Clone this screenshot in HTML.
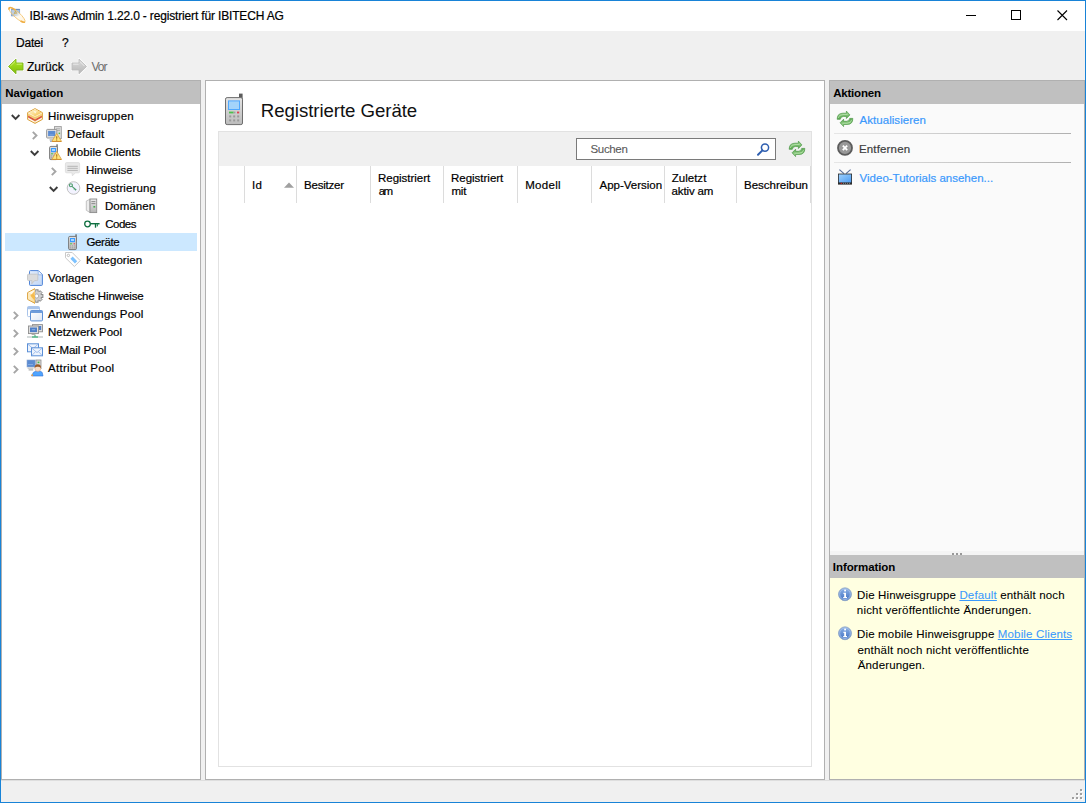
<!DOCTYPE html>
<html lang="de">
<head>
<meta charset="utf-8">
<title>IBI-aws Admin 1.22.0 - registriert für IBITECH AG</title>
<style>
*{box-sizing:border-box;margin:0;padding:0}
html,body{width:1086px;height:803px;overflow:hidden;background:#f0f0f0}
body{font-family:"Liberation Sans",sans-serif;font-size:11.5px;color:#000;position:relative;line-height:14px;-webkit-text-stroke:.2px}
#win{position:absolute;left:0;top:0;width:1086px;height:803px;border:1px solid #1883d7;background:#f0f0f0}
#title{position:absolute;left:1px;top:1px;width:1084px;height:30px;background:#fff}
#menu{position:absolute;left:1px;top:31px;width:1084px;height:24px}
#tool{position:absolute;left:1px;top:55px;width:1084px;height:25px}
#status{position:absolute;left:1px;top:780px;width:1084px;height:22px;border-top:1px solid #dedede}
#status svg{margin-top:-1px}
.t{white-space:nowrap;position:absolute}
svg{position:absolute;overflow:visible}
#nav{position:absolute;left:1px;top:80px;width:200px;height:700px;background:#fff;box-shadow:inset 0 0 0 1px #b0b0b0}
.hdr{position:absolute;left:0;top:0;right:0;height:24px;background:#c0c0c0;font-weight:bold;-webkit-text-stroke:0;border:1px solid #b0b0b0;border-bottom:0}
.hdr .t{margin:-1px 0 0 -1px}
.row.sel{background:#cce8ff}
#main{position:absolute;left:205px;top:80px;width:620px;height:700px;background:#fff;box-shadow:inset 0 0 0 1px #b0b0b0}
#grid{position:absolute;left:13px;top:51px;width:594px;height:636px;background:#fff;box-shadow:inset 0 0 0 1px #e2e2e2}
#gtb{position:absolute;left:1px;top:1px;right:1px;height:34px;background:#f0f0f0}
#gtb>svg{margin:-1px 0 0 -1px}
#search{position:absolute;left:357px;top:6px;width:200px;height:22px;box-shadow:inset 0 0 0 1px #7a7a7a;background:#fff}
.ch{border-left:1px solid #dcdcdc}
.ch>*{margin-left:-1px}
.clip{position:absolute;left:0;top:0;height:37px;overflow:hidden}
#right{position:absolute;left:829px;top:80px;width:256px;height:700px;box-shadow:inset 0 0 0 1px #b0b0b0;background:#fafafa}
#split{position:absolute;left:1px;right:1px;top:471px;height:4px;background:#f4f4f4}
#split svg{margin-left:-1px}
#info{position:absolute;left:0;right:0;top:475px;bottom:0;background:#ffffe1;box-shadow:inset 1px 0 0 #b0b0b0,inset -1px 0 0 #b0b0b0,inset 0 -1px 0 #b0b0b0}
#info .hdr{height:23px;border:0;left:1px;right:1px}
#info .hdr .t{margin:0 0 0 -1px}
.sep{background:linear-gradient(to right,#e6e6e6,#b0b0b0)}
a{color:#3b99fc;text-decoration:underline}
.link{color:#3b99fc}
</style>
</head>
<body>
<svg width="0" height="0" style="left:0;top:0"><defs>
<linearGradient id="gph" x1="0" y1="0" x2="0" y2="1"><stop offset="0" stop-color="#e4e4e4"/><stop offset="1" stop-color="#bcbcbc"/></linearGradient>
<linearGradient id="gbox" x1="0" y1="0" x2="1" y2="1"><stop offset="0" stop-color="#fff6dc"/><stop offset=".55" stop-color="#fbdc8c"/><stop offset="1" stop-color="#f3b63c"/></linearGradient>
<linearGradient id="gstat" x1="0" y1="0" x2="1" y2="0"><stop offset="0" stop-color="#fff4d8"/><stop offset="1" stop-color="#f2b43c"/></linearGradient>
<linearGradient id="gsrv" x1="0" y1="0" x2="0" y2="1"><stop offset="0" stop-color="#ececec"/><stop offset="1" stop-color="#b4b4b4"/></linearGradient>
<linearGradient id="gwin" x1="0" y1="0" x2="1" y2="1"><stop offset="0" stop-color="#ffffff"/><stop offset="1" stop-color="#dfe7f4"/></linearGradient>
<linearGradient id="grf" x1="0" y1="0" x2="0" y2="1"><stop offset="0" stop-color="#a4da96"/><stop offset="1" stop-color="#58a64e"/></linearGradient>
<linearGradient id="ginf" x1="0" y1="0" x2="0" y2="1"><stop offset="0" stop-color="#8fb4e8"/><stop offset="1" stop-color="#3f6fc0"/></linearGradient>
<linearGradient id="gback" x1="0" y1="0" x2="0" y2="1"><stop offset="0" stop-color="#b4e62c"/><stop offset=".5" stop-color="#98d416"/><stop offset="1" stop-color="#82bc10"/></linearGradient>
<linearGradient id="gfwd" x1="0" y1="0" x2="0" y2="1"><stop offset="0" stop-color="#dcdcdc"/><stop offset="1" stop-color="#b6b6b6"/></linearGradient>
<linearGradient id="gtv" x1="0" y1="0" x2="1" y2="1"><stop offset="0" stop-color="#9cd0ff"/><stop offset="1" stop-color="#4f9cf0"/></linearGradient>
<linearGradient id="gell" x1="0" y1="0" x2="1" y2="0"><stop offset="0" stop-color="#fff8ea" stop-opacity=".1"/><stop offset=".4" stop-color="#fff8ea" stop-opacity=".25"/><stop offset=".6" stop-color="#fffaf0" stop-opacity=".95"/><stop offset="1" stop-color="#fff3dc"/></linearGradient>
<linearGradient id="gdoc" x1="0" y1="0" x2="1" y2="1"><stop offset="0" stop-color="#e2ecfb"/><stop offset="1" stop-color="#c2d7f5"/></linearGradient>
<clipPath id="cgear"><rect x="8.2" y="0" width="9" height="16"/></clipPath>
</defs></svg>

<div id="win"></div>
<div id="title">
<svg style="left:7px;top:5px" width="18" height="18" viewBox="0 0 18 18"><rect x="3.3" y="3.3" width="8.4" height="6.6" fill="#aac4e2" stroke="#7f9dc4" stroke-width=".7"/><path d="M3.3 3.4 H11.7" stroke="#5f83b4" stroke-width=".9"/><path d="M5.9 8.4 L7.5 5 L9.1 8.4 M6.6 7.2 H8.4" stroke="#b8922a" stroke-width=".9" fill="none"/><g transform="rotate(42 9 8.9)"><ellipse cx="9" cy="8.9" rx="10.6" ry="2.9" fill="url(#gell)" stroke="#f3c26a" stroke-width=".8"/><ellipse cx="9" cy="8.9" rx="10.4" ry="2.8" fill="none" stroke="#f0ae44" stroke-width="1.7" stroke-dasharray="4.5 16 9 16 4.5"/></g></svg>
<span id="ttl" class="t" style="left:28.5px;top:8px;letter-spacing:-0.16px;font-size:12px">IBI-aws Admin 1.22.0 - registriert für IBITECH AG</span>
<svg style="left:959px;top:4px" width="120" height="20" viewBox="0 0 120 20"><path d="M6 10.5 H16" stroke="#000" stroke-width="1"/><rect x="51.5" y="5.5" width="9" height="9" fill="none" stroke="#000" stroke-width="1"/><path d="M97.5 5.5 L107 15 M107 5.5 L97.5 15" stroke="#000" stroke-width="1.1"/></svg>
</div>
<div id="menu">
<span id="datei" class="t" style="left:15.0px;top:5px;letter-spacing:-0.2px;font-size:12px">Datei</span>
<span id="qm" class="t" style="left:61.1px;top:5px;font-size:12px">?</span>
</div>
<div id="tool">
<svg style="left:7px;top:4px" width="15" height="15" viewBox="0 0 15 15"><path d="M.3 7.5 L8 -.1 L8 4 L15.1 4 L15.1 11 L8 11 L8 15.1Z" fill="none" stroke="#fff" stroke-opacity=".7" stroke-width="2.2" stroke-linejoin="round"/><path d="M.5 7.5 L8 .2 L8 4 L15 4 L15 11 L8 11 L8 14.8Z" fill="url(#gback)" stroke="#7db31a" stroke-width=".9" stroke-linejoin="round"/><path d="M2.4 7 L7 2.6 M8.6 5.2 H13.8" stroke="#d8f58a" stroke-width=".9" stroke-opacity=".9" fill="none"/></svg>
<span id="zurueck" class="t" style="left:25.9px;top:5px;letter-spacing:0.02px;font-size:12px">Zurück</span>
<svg style="left:71px;top:4px" width="15" height="15" viewBox="0 0 15 15"><path d="M14.7 7.5 L7 -.1 L7 4 L-.1 4 L-.1 11 L7 11 L7 15.1Z" fill="none" stroke="#fff" stroke-opacity=".6" stroke-width="2.2" stroke-linejoin="round"/><path d="M14.5 7.5 L7 .2 L7 4 L0 4 L0 11 L7 11 L7 14.8Z" fill="url(#gfwd)" stroke="#bcbcbc" stroke-width=".9" stroke-linejoin="round"/><path d="M1.2 5.2 H6.6 M8 2.6 L12.4 7" stroke="#ececec" stroke-width=".9" fill="none"/></svg>
<span id="vor" class="t" style="left:90.4px;top:5px;letter-spacing:-0.9px;font-size:12px;color:#6d6d6d;-webkit-text-stroke:0">Vor</span>
</div>
<div id="nav">
<div class="hdr"><span id="hnav" class="t" style="left:4.2px;top:6px;letter-spacing:-0.078px">Navigation</span></div>
<div class="row" style="position:absolute;left:4px;top:27px;width:192px;height:18px;">
<svg style="left:6px;top:0px" width="10" height="18" viewBox="0 0 10 18"><path d="M.8 8 L4.6 11.8 L8.4 8" fill="none" stroke="#3c3c3c" stroke-width="1.9"/></svg>
<svg style="left:22px;top:1px" width="16" height="16" viewBox="0 0 16 16"><path d="M8 .6 L15.4 4.6 L15.4 11.4 L8 15.4 L.6 11.4 L.6 4.6 Z" fill="#fff6e4" stroke="#dba23c" stroke-width="1" stroke-linejoin="round"/><path d="M8 1.1 L14.8 4.7 L8 8.3 L1.2 4.7 Z" fill="url(#gbox)"/><path d="M1.1 5.4 L8 9 L14.9 5.4 L14.9 7.4 L8 11 L1.1 7.4 Z" fill="#f7d070"/><path d="M1.1 7.6 L8 11.2 L14.9 7.6 L14.9 9.6 L8 13.2 L1.1 9.6 Z" fill="#d9573a"/><path d="M6.4 3 L9.6 3.4 L8.2 5.6Z" fill="#fffbe8"/><path d="M8 8.4 V15" stroke="#e8b85a" stroke-width=".5"/></svg>
<span id="row0" class="t" style="left:43.0px;top:2px;letter-spacing:0.254px">Hinweisgruppen</span>
</div>
<div class="row" style="position:absolute;left:4px;top:45px;width:192px;height:18px;">
<svg style="left:27px;top:0px" width="6" height="18" viewBox="0 0 6 18"><path d="M.8 6.8 L4.5 10.5 L.8 14.2" fill="none" stroke="#a6a6a6" stroke-width="1.9"/></svg>
<svg style="left:41px;top:1px" width="16" height="16" viewBox="0 0 16 16"><rect x="8.5" y=".6" width="6.8" height="12" fill="#dedede" stroke="#9c9c9c" stroke-width=".9"/><rect x="10" y="2.4" width="4" height=".9" fill="#a8a8a8"/><rect x="10" y="4.2" width="4" height=".9" fill="#a8a8a8"/><rect x="12.6" y="6.6" width="1.5" height="1.5" fill="#4cb84c"/><rect x=".6" y="3.4" width="10.2" height="8.6" rx=".8" fill="#e2e2e2" stroke="#8e8e8e" stroke-width=".9"/><rect x="2.1" y="4.9" width="7.2" height="5.2" fill="#5b8bd2"/><rect x="3.6" y="8.6" width="4" height=".7" fill="#8fb2e4"/><path d="M3.5 13 L8 13 L8 14.6 L3.5 14.6Z" fill="#c8c8c8"/><path d="M4 15.2 L6 15.2" stroke="#6e8fc4" stroke-width="1"/><path d="M10.7 7.4 L15.5 15.4 L5.9 15.4 Z" fill="#ffe47a" stroke="#dba548" stroke-width=".9" stroke-linejoin="round"/><path d="M6.2 15.5 H15.3" stroke="#d08a2c" stroke-width=".9"/><path d="M10.7 10.2 L10.7 12.8" stroke="#b47a20" stroke-width="1.2"/><circle cx="10.7" cy="14" r=".65" fill="#b47a20"/></svg>
<span id="row1" class="t" style="left:62.1px;top:2px;letter-spacing:0.1px">Default</span>
</div>
<div class="row" style="position:absolute;left:4px;top:63px;width:192px;height:18px;">
<svg style="left:25px;top:0px" width="10" height="18" viewBox="0 0 10 18"><path d="M.8 8 L4.6 11.8 L8.4 8" fill="none" stroke="#3c3c3c" stroke-width="1.9"/></svg>
<svg style="left:41px;top:1px" width="16" height="16" viewBox="0 0 16 16"><rect x="10.4" y="0.3" width="1.3" height="6" fill="#606060"/><rect x="3.6" y="2.4" width="7.8" height="13.2" rx="1.2" fill="url(#gph)" stroke="#6e6e6e" stroke-width=".9"/><rect x="5" y="4" width="5" height="4.2" fill="#3b9bff"/><rect x="6" y="5" width="3" height="2" fill="#a8d6ff"/><rect x="5" y="9.3" width="2.2" height="1" fill="#4cc04c"/><rect x="8.6" y="9.3" width="1.4" height="1" fill="#e04040"/><g fill="#a0a0a0"><rect x="5" y="11.4" width="1.1" height="1"/><rect x="7" y="11.4" width="1.1" height="1"/><rect x="9" y="11.4" width="1.1" height="1"/><rect x="5" y="13.3" width="1.1" height="1"/><rect x="7" y="13.3" width="1.1" height="1"/><rect x="9" y="13.3" width="1.1" height="1"/></g><path d="M10.7 7.4 L15.5 15.4 L5.9 15.4 Z" fill="#ffe47a" stroke="#dba548" stroke-width=".9" stroke-linejoin="round"/><path d="M6.2 15.5 H15.3" stroke="#d08a2c" stroke-width=".9"/><path d="M10.7 10.2 L10.7 12.8" stroke="#b47a20" stroke-width="1.2"/><circle cx="10.7" cy="14" r=".65" fill="#b47a20"/></svg>
<span id="row2" class="t" style="left:62.1px;top:2px;letter-spacing:0.1px">Mobile Clients</span>
</div>
<div class="row" style="position:absolute;left:4px;top:81px;width:192px;height:18px;">
<svg style="left:46px;top:0px" width="6" height="18" viewBox="0 0 6 18"><path d="M.8 6.8 L4.5 10.5 L.8 14.2" fill="none" stroke="#a6a6a6" stroke-width="1.9"/></svg>
<svg style="left:60px;top:1px" width="16" height="16" viewBox="0 0 16 16"><path d="M1.6 .6 L13.4 .6 Q14.6 .6 14.6 1.8 L14.6 9.6 Q14.6 10.8 13.4 10.8 L10.4 10.8 L7.4 13.8 L7 10.8 L1.6 10.8 Q.4 10.8 .4 9.6 L.4 1.8 Q.4 .6 1.6 .6Z" fill="#e9e9e9" stroke="#dadada" stroke-width=".8"/><path d="M2.4 4.3 H12.8 M2.4 6.3 H12.8 M2.4 8.4 H12.8" stroke="#b4b4b4" stroke-width="1"/></svg>
<span id="row3" class="t" style="left:81.0px;top:2px;letter-spacing:0.001px">Hinweise</span>
</div>
<div class="row" style="position:absolute;left:4px;top:99px;width:192px;height:18px;">
<svg style="left:44px;top:0px" width="10" height="18" viewBox="0 0 10 18"><path d="M.8 8 L4.6 11.8 L8.4 8" fill="none" stroke="#3c3c3c" stroke-width="1.9"/></svg>
<svg style="left:60px;top:1px" width="16" height="16" viewBox="0 0 16 16"><circle cx="8.5" cy="8" r="6.3" fill="#f3f3ff" stroke="#c2c2c2" stroke-width="1"/><circle cx="5.9" cy="5.2" r="1.5" fill="none" stroke="#4c9c6c" stroke-width="1.1"/><path d="M7 6.3 L11 9.8 M8.8 9.4 L10 8.2 M10.2 10.4 L11.2 9.2" stroke="#4c9c6c" stroke-width="1.1" fill="none"/></svg>
<span id="row4" class="t" style="left:81.0px;top:2px;letter-spacing:0.133px">Registrierung</span>
</div>
<div class="row" style="position:absolute;left:4px;top:117px;width:192px;height:18px;">
<svg style="left:79px;top:1px" width="16" height="16" viewBox="0 0 16 16"><path d="M2.3 3 L6 1.2 L6 14.5 L2.3 12.3Z" fill="#ededed" stroke="#bcbcbc" stroke-width=".9" stroke-linejoin="round"/><rect x="6" y="1" width="6.7" height="13.6" fill="url(#gsrv)" stroke="#8c8c8c" stroke-width=".9"/><path d="M7.4 3.6 H11.4 M7.4 5.6 H11.4" stroke="#8e8e8e" stroke-width="1"/><rect x="9.4" y="8" width="1.8" height="1.6" fill="#44b04c"/></svg>
<span id="row5" class="t" style="left:100.0px;top:2px;letter-spacing:0.033px">Domänen</span>
</div>
<div class="row" style="position:absolute;left:4px;top:135px;width:192px;height:18px;">
<svg style="left:79px;top:1px" width="16" height="16" viewBox="0 0 16 16"><circle cx="3.5" cy="8" r="2.8" fill="none" stroke="#0f6f40" stroke-width="1.3"/><path d="M6.3 7.7 H15.6" stroke="#0f6f40" stroke-width="1.4"/><path d="M11.5 8 V11.7" stroke="#0f6f40" stroke-width="1.3"/><path d="M13.6 8 L13.2 10.4" stroke="#2f8f60" stroke-width="1.3"/></svg>
<span id="row6" class="t" style="left:100.2px;top:2px;letter-spacing:-0.475px">Codes</span>
</div>
<div class="row sel" style="position:absolute;left:4px;top:153px;width:192px;height:18px;">
<svg style="left:60px;top:1px" width="16" height="16" viewBox="0 0 16 16"><rect x="10.4" y="0.3" width="1.3" height="6" fill="#606060"/><rect x="3.6" y="2.4" width="7.8" height="13.2" rx="1.2" fill="url(#gph)" stroke="#6e6e6e" stroke-width=".9"/><rect x="5" y="4" width="5" height="4.2" fill="#3b9bff"/><rect x="6" y="5" width="3" height="2" fill="#a8d6ff"/><rect x="5" y="9.3" width="2.2" height="1" fill="#4cc04c"/><rect x="8.6" y="9.3" width="1.4" height="1" fill="#e04040"/><g fill="#a0a0a0"><rect x="5" y="11.4" width="1.1" height="1"/><rect x="7" y="11.4" width="1.1" height="1"/><rect x="9" y="11.4" width="1.1" height="1"/><rect x="5" y="13.3" width="1.1" height="1"/><rect x="7" y="13.3" width="1.1" height="1"/><rect x="9" y="13.3" width="1.1" height="1"/></g></svg>
<span id="row7" class="t" style="left:81.4px;top:2px;letter-spacing:-0.36px">Geräte</span>
</div>
<div class="row" style="position:absolute;left:4px;top:171px;width:192px;height:18px;">
<svg style="left:60px;top:1px" width="16" height="16" viewBox="0 0 16 16"><path d="M.5 .5 L7.2 .5 L15.2 8.6 L9.4 14.5 L.5 5.8Z" fill="#fff" stroke="#c9c9c9" stroke-width="1" stroke-linejoin="round"/><circle cx="3.4" cy="3.4" r="1.2" fill="#fff" stroke="#b8b8b8" stroke-width=".9"/><rect x="5.6" y="6.4" width="6.4" height="3.2" fill="#7cc2ff" transform="rotate(45 8.8 8)"/></svg>
<span id="row8" class="t" style="left:81.1px;top:2px;letter-spacing:0.054px">Kategorien</span>
</div>
<div class="row" style="position:absolute;left:4px;top:189px;width:192px;height:18px;">
<svg style="left:22px;top:1px" width="16" height="16" viewBox="0 0 16 16"><path d="M3.4 .6 L11.4 .6 L15.4 4.6 L15.4 14.6 Q15.4 15.4 14.6 15.4 L3.4 15.4 Q2.5 15.4 2.5 14.6 L2.5 1.5 Q2.5 .6 3.4 .6Z" fill="url(#gdoc)" stroke="#4f84d8" stroke-width="1" stroke-linejoin="round"/><path d="M11.2 .8 L11.2 4.8 L15.2 4.8" fill="#eef4fd" stroke="#7fa6e4" stroke-width=".7"/><path d="M1.6 4.2 L9.8 4.2 Q10.8 4.2 10.8 5.2 L10.8 9.6 Q10.8 10.6 9.8 10.6 L7.6 10.6 L4.8 13.8 L5 10.6 L1.6 10.6 Q.5 10.6 .5 9.6 L.5 5.2 Q.5 4.2 1.6 4.2Z" fill="#dcdcdc" stroke="#c2c2c2" stroke-width=".8"/></svg>
<span id="row9" class="t" style="left:43.0px;top:2px;letter-spacing:0.059px">Vorlagen</span>
</div>
<div class="row" style="position:absolute;left:4px;top:207px;width:192px;height:18px;">
<svg style="left:22px;top:1px" width="16" height="16" viewBox="0 0 16 16"><g clip-path="url(#cgear)"><g transform="translate(9.7 8)"><g fill="#d2d2d2" stroke="#7c7c7c" stroke-width=".9"><rect x="-1.4" y="-6.2" width="2.8" height="12.4"/><rect x="-1.4" y="-6.2" width="2.8" height="12.4" transform="rotate(45)"/><rect x="-1.4" y="-6.2" width="2.8" height="12.4" transform="rotate(90)"/><rect x="-1.4" y="-6.2" width="2.8" height="12.4" transform="rotate(135)"/></g><circle r="4.4" fill="#cfcfcf"/><circle r="2" fill="#fff" stroke="#8e8e8e" stroke-width=".6"/></g></g><path d="M8 .6 L.6 4.6 L.6 11.4 L8 15.4Z" fill="url(#gstat)"/><path d="M8 .6 L.6 4.6 L.6 11.4 L8 15.4" fill="none" stroke="#dba23c" stroke-width="1" stroke-linejoin="round"/><path d="M7.6 1.4 L1.4 4.8 L7.6 7.8 Z" fill="#fff8e6"/><path d="M1.3 5.2 L1.3 11 L7.5 14.4 L7.5 8.4Z" fill="#fdecc0" opacity=".7"/><path d="M7.6 3 L3.4 7.8 L7.6 12.6Z" fill="#f3b540" opacity=".85"/></svg>
<span id="row10" class="t" style="left:43.2px;top:2px;letter-spacing:-0.094px">Statische Hinweise</span>
</div>
<div class="row" style="position:absolute;left:4px;top:225px;width:192px;height:18px;">
<svg style="left:8px;top:0px" width="6" height="18" viewBox="0 0 6 18"><path d="M.8 6.8 L4.5 10.5 L.8 14.2" fill="none" stroke="#a6a6a6" stroke-width="1.9"/></svg>
<svg style="left:22px;top:1px" width="16" height="16" viewBox="0 0 16 16"><rect x=".5" y=".6" width="12" height="10" rx="1" fill="#fff" stroke="#a9c4ea" stroke-width="1"/><rect x=".5" y=".6" width="12" height="2.6" rx="1" fill="#a9c4ea"/><rect x="3.5" y="4.5" width="12" height="10.4" rx="1" fill="url(#gwin)" stroke="#5b8fd6" stroke-width="1"/><rect x="3.5" y="4.5" width="12" height="2.4" rx="1" fill="#6e9cda"/></svg>
<span id="row11" class="t" style="left:43.0px;top:2px;letter-spacing:0.193px">Anwendungs Pool</span>
</div>
<div class="row" style="position:absolute;left:4px;top:243px;width:192px;height:18px;">
<svg style="left:8px;top:0px" width="6" height="18" viewBox="0 0 6 18"><path d="M.8 6.8 L4.5 10.5 L.8 14.2" fill="none" stroke="#a6a6a6" stroke-width="1.9"/></svg>
<svg style="left:22px;top:1px" width="16" height="16" viewBox="0 0 16 16"><rect x="5.5" y=".6" width="10" height="7.2" fill="#e0e0e0" stroke="#8e8e8e" stroke-width=".9"/><rect x="11.6" y="2" width="2.6" height="4" fill="#4f7fc8"/><rect x="1.5" y="2" width="10" height="7.6" fill="#e0e0e0" stroke="#8e8e8e" stroke-width=".9"/><rect x="3" y="3.5" width="7" height="4.6" fill="#4f7fc8"/><rect x="4.8" y="5.2" width="3.4" height="1" fill="#8fb2e4"/><rect x="4.6" y="10" width="3.8" height="1" fill="#b0b0b0"/><path d="M0 13 H16" stroke="#c4cccc" stroke-width="1.4"/><path d="M5 13 H11" stroke="#4fb884" stroke-width="1.4"/><path d="M8 11 V13" stroke="#4fb884" stroke-width="1.2"/></svg>
<span id="row12" class="t" style="left:43.0px;top:2px;letter-spacing:-0.007px">Netzwerk Pool</span>
</div>
<div class="row" style="position:absolute;left:4px;top:261px;width:192px;height:18px;">
<svg style="left:8px;top:0px" width="6" height="18" viewBox="0 0 6 18"><path d="M.8 6.8 L4.5 10.5 L.8 14.2" fill="none" stroke="#a6a6a6" stroke-width="1.9"/></svg>
<svg style="left:22px;top:1px" width="16" height="16" viewBox="0 0 16 16"><rect x=".5" y="1.8" width="11" height="8" fill="#eef4fd" stroke="#5b8fd6" stroke-width="1"/><path d="M1 2.3 L6 6.6 L11 2.3" fill="none" stroke="#8fb2e8" stroke-width=".8"/><rect x="4.5" y="5.8" width="11" height="8" fill="#eef4fd" stroke="#5b8fd6" stroke-width="1"/><path d="M5 6.3 L10 10.6 L15 6.3 M5 13.3 L8.6 9.6 M15 13.3 L11.4 9.6" fill="none" stroke="#8fb2e8" stroke-width=".8"/></svg>
<span id="row13" class="t" style="left:43.0px;top:2px;letter-spacing:-0.04px">E-Mail Pool</span>
</div>
<div class="row" style="position:absolute;left:4px;top:279px;width:192px;height:18px;">
<svg style="left:8px;top:0px" width="6" height="18" viewBox="0 0 6 18"><path d="M.8 6.8 L4.5 10.5 L.8 14.2" fill="none" stroke="#a6a6a6" stroke-width="1.9"/></svg>
<svg style="left:22px;top:1px" width="16" height="16" viewBox="0 0 16 16"><rect x="9" y="0" width="5" height="8.6" fill="#d8d8d8" stroke="#8e8e8e" stroke-width=".8"/><rect x="10.6" y="1.6" width="1.8" height="1.6" fill="#3fb84a"/><rect x="0" y="0" width="8.2" height="7" fill="#5b8bd2" stroke="#8ea8d0" stroke-width=".6"/><rect x="1" y="4.2" width="5" height=".8" fill="#8fb2e4"/><rect x=".6" y="7.6" width="6" height="1.2" fill="#c4c4c4"/><rect x="1.6" y="9.4" width="4.6" height="1" fill="#9c9c9c"/><path d="M4.6 16 L6.4 12.4 Q8 11 11 11 Q14 11 15.2 12.4 L16 16Z" fill="#4fa4ff" stroke="#2f6fd0" stroke-width=".6"/><rect x="4.4" y="14.4" width="1.6" height="1.6" fill="#f0a040"/><circle cx="10.8" cy="8.4" r="3" fill="#f8dcc6" stroke="#c89070" stroke-width=".4"/><path d="M7.6 8 Q7.4 4.2 10.8 4.2 Q14.2 4.2 14 8 Q12 6.4 10.8 6.8 Q9 6.4 7.6 8Z" fill="#9a5a28"/></svg>
<span id="row14" class="t" style="left:43.0px;top:2px;letter-spacing:0.291px">Attribut Pool</span>
</div>
</div>
<div id="main">
<svg style="left:13px;top:13px" width="32" height="32" viewBox="0 0 32 32"><rect x="21" y=".6" width="3.6" height="8" fill="#5c5c5c"/><rect x="7.5" y="4.6" width="17" height="27" rx="1.6" fill="url(#gph)" stroke="#6e6e6e" stroke-width="1"/><rect x="10" y="7.4" width="12" height="9.6" fill="#4fa8ff"/><rect x="11" y="8.4" width="10" height="7.6" fill="#a4d4fa"/><rect x="11" y="18.6" width="4.6" height="1.8" fill="#4cc04c"/><rect x="15.6" y="18.6" width="1.8" height="1.8" fill="#a0a0a0"/><rect x="19" y="18.6" width="2.2" height="1.8" fill="#e04050"/><g fill="#9a9a9a"><rect x="11.2" y="22.4" width="2" height="2"/><rect x="15.2" y="22.4" width="2" height="2"/><rect x="19.2" y="22.4" width="2" height="2"/><rect x="11.2" y="26.4" width="2" height="2"/><rect x="15.2" y="26.4" width="2" height="2"/><rect x="19.2" y="26.4" width="2" height="2"/></g></svg>
<span id="h1" class="t" style="left:55.8px;top:20px;letter-spacing:-0.066px;font-size:18.67px;line-height:22px;-webkit-text-stroke:0;color:#111">Registrierte Geräte</span>
<div id="grid">
<div id="gtb">
<div id="search">
<span id="suchen" class="t" style="left:14.5px;top:4px;letter-spacing:-0.34px;color:#5a5a5a;-webkit-text-stroke:.1px">Suchen</span>
<svg style="left:180px;top:4px" width="14" height="14" viewBox="0 0 14 14"><circle cx="9" cy="5.6" r="3.6" fill="#fff" stroke="#2f5fb0" stroke-width="1.5"/><path d="M6.4 8.4 L2 12.8" stroke="#2f5fb0" stroke-width="2" stroke-linecap="round"/></svg>
</div>
<svg style="left:571px;top:10px" width="16" height="16" viewBox="0 0 16 16"><g><path d="M.2 8.3 Q.1 2.2 6 2.2 L9.4 2.2 L9.4 .1 L12.9 3.9 L9.4 7.5 L9.4 5.4 L6.6 5.4 Q3.6 5.4 3.3 8.3Z" fill="url(#grf)" stroke="#4c9646" stroke-width=".7" stroke-linejoin="round"/><path d="M1.2 7 Q1.8 3.6 6 3.5 L10.6 3.5" fill="none" stroke="#c4eabc" stroke-width=".8" stroke-opacity=".8"/></g><g transform="rotate(180 8 7.85)"><path d="M.2 8.3 Q.1 2.2 6 2.2 L9.4 2.2 L9.4 .1 L12.9 3.9 L9.4 7.5 L9.4 5.4 L6.6 5.4 Q3.6 5.4 3.3 8.3Z" fill="url(#grf)" stroke="#4c9646" stroke-width=".7" stroke-linejoin="round"/><path d="M1.2 7 Q1.8 3.6 6 3.5 L10.6 3.5" fill="none" stroke="#c4eabc" stroke-width=".8" stroke-opacity=".8"/></g></svg>
</div>
<div class="ch" style="position:absolute;left:26px;top:35px;width:52px;height:37px;">
<div class="clip" style="width:50px">
<span id="col0" class="t" style="left:8.0px;top:12px;letter-spacing:0.4px">Id</span>
</div>
<svg style="left:39.5px;top:15.6px" width="10" height="6" viewBox="0 0 10 6"><path d="M0 5.8 L5 .4 L10 5.8Z" fill="#a0a0a0"/></svg>
</div>
<div class="ch" style="position:absolute;left:78px;top:35px;width:74px;height:37px;">
<div class="clip" style="width:72px">
<span id="col1" class="t" style="left:8.0px;top:12px;letter-spacing:-0.217px">Besitzer</span>
</div>
</div>
<div class="ch" style="position:absolute;left:152px;top:35px;width:73px;height:37px;">
<div class="clip" style="width:71px">
<span id="col2a" class="t" style="left:8.0px;top:4.5px;letter-spacing:-0.02px">Registriert</span>
<span id="col2b" class="t" style="left:8.7px;top:17.5px;letter-spacing:-1.5px">am</span>
</div>
</div>
<div class="ch" style="position:absolute;left:225px;top:35px;width:74px;height:37px;">
<div class="clip" style="width:72px">
<span id="col3a" class="t" style="left:8.0px;top:4.5px;letter-spacing:-0.01px">Registriert</span>
<span id="col3b" class="t" style="left:8.4px;top:17.5px;letter-spacing:-0.1px">mit</span>
</div>
</div>
<div class="ch" style="position:absolute;left:299px;top:35px;width:74px;height:37px;">
<div class="clip" style="width:72px">
<span id="col4" class="t" style="left:8.2px;top:12px;letter-spacing:0.32px">Modell</span>
</div>
</div>
<div class="ch" style="position:absolute;left:373px;top:35px;width:73px;height:37px;">
<div class="clip" style="width:71px">
<span id="col5" class="t" style="left:8.5px;top:12px">App-Version</span>
</div>
</div>
<div class="ch" style="position:absolute;left:446px;top:35px;width:72px;height:37px;">
<div class="clip" style="width:70px">
<span id="col6a" class="t" style="left:7.8px;top:4.5px;letter-spacing:0.002px">Zuletzt</span>
<span id="col6b" class="t" style="left:7.6px;top:17.5px;letter-spacing:-0.142px">aktiv am</span>
</div>
</div>
<div class="ch" style="position:absolute;left:518px;top:35px;width:74px;height:37px;">
<div class="clip" style="width:72px">
<span id="col7" class="t" style="left:8px;top:12px">Beschreibung</span>
</div>
</div>
<div class="ch" style="position:absolute;left:592px;top:35px;width:1px;height:37px;"></div>
</div>
</div>
<div id="right">
<div class="hdr"><span id="hakt" class="t" style="left:4.2px;top:6px;letter-spacing:-0.2px">Aktionen</span></div>
<svg style="left:8px;top:31px" width="16" height="16" viewBox="0 0 16 16"><g><path d="M.2 8.3 Q.1 2.2 6 2.2 L9.4 2.2 L9.4 .1 L12.9 3.9 L9.4 7.5 L9.4 5.4 L6.6 5.4 Q3.6 5.4 3.3 8.3Z" fill="url(#grf)" stroke="#4c9646" stroke-width=".7" stroke-linejoin="round"/><path d="M1.2 7 Q1.8 3.6 6 3.5 L10.6 3.5" fill="none" stroke="#c4eabc" stroke-width=".8" stroke-opacity=".8"/></g><g transform="rotate(180 8 7.85)"><path d="M.2 8.3 Q.1 2.2 6 2.2 L9.4 2.2 L9.4 .1 L12.9 3.9 L9.4 7.5 L9.4 5.4 L6.6 5.4 Q3.6 5.4 3.3 8.3Z" fill="url(#grf)" stroke="#4c9646" stroke-width=".7" stroke-linejoin="round"/><path d="M1.2 7 Q1.8 3.6 6 3.5 L10.6 3.5" fill="none" stroke="#c4eabc" stroke-width=".8" stroke-opacity=".8"/></g></svg>
<span id="akt" class="t link" style="left:30.6px;top:33px;letter-spacing:0.036px">Aktualisieren</span>
<div class="sep" style="position:absolute;left:5px;top:53px;width:237px;height:1px;"></div>
<svg style="left:8px;top:60px" width="16" height="16" viewBox="0 0 16 16"><circle cx="8" cy="7.9" r="7" fill="#989898" stroke="#5c5c5c" stroke-width="1.8"/><path d="M5.8 5.7 L10.2 10.1 M10.2 5.7 L5.8 10.1" stroke="#fff" stroke-width="1.8"/></svg>
<span id="entf" class="t" style="left:29.9px;top:62px;letter-spacing:0.167px;color:#404040">Entfernen</span>
<div class="sep" style="position:absolute;left:5px;top:82px;width:237px;height:1px;"></div>
<svg style="left:8px;top:89px" width="16" height="16" viewBox="0 0 16 16"><path d="M2.4 .6 L7 4.6 M13.6 .6 L9 4.6" stroke="#5a6f9c" stroke-width="1.2"/><rect x="1" y="4.6" width="14" height="11" fill="#2c2c2c"/><rect x="1.8" y="5.4" width="12.4" height="8" fill="url(#gtv)"/><rect x="3.6" y="13.8" width="1.4" height="1" fill="#e02020"/><g fill="#888"><rect x="6" y="13.8" width="1" height="1"/><rect x="8" y="13.8" width="1" height="1"/><rect x="10" y="13.8" width="1" height="1"/><rect x="12" y="13.8" width="1" height="1"/></g></svg>
<span id="vid" class="t link" style="left:30.6px;top:91px;letter-spacing:-0.004px">Video-Tutorials ansehen...</span>
<div id="split"><svg style="left:123px;top:2px" width="10" height="2" viewBox="0 0 10 2"><g fill="#989898"><rect x="0" y="0" width="2" height="2"/><rect x="4" y="0" width="2" height="2"/><rect x="8" y="0" width="2" height="2"/></g></svg></div>
<div id="info">
<div class="hdr"><span id="hinf" class="t" style="left:3.8px;top:5px;letter-spacing:-0.07px">Information</span></div>
<svg style="left:8px;top:31px" width="16" height="16" viewBox="0 0 16 16"><circle cx="8" cy="8.3" r="6.4" fill="url(#ginf)" stroke="#8ea6c8" stroke-width="1"/><circle cx="8" cy="8.3" r="5.3" fill="none" stroke="#a8c4ec" stroke-width=".8"/><rect x="7.2" y="3.6" width="1.8" height="1.8" fill="#fff"/><path d="M6.4 6.8 H9 V11 H10 V12.2 H6.2 V11 H7.2 V8 H6.4Z" fill="#fff"/></svg>
<span id="i1a" class="t" style="left:28.0px;top:33px;letter-spacing:0.149px;-webkit-text-stroke:.08px">Die Hinweisgruppe <a>Default</a> enthält noch</span>
<span id="i1b" class="t" style="left:27.8px;top:48px;letter-spacing:0.207px;-webkit-text-stroke:.08px">nicht veröffentlichte Änderungen.</span>
<svg style="left:8px;top:70px" width="16" height="16" viewBox="0 0 16 16"><circle cx="8" cy="8.3" r="6.4" fill="url(#ginf)" stroke="#8ea6c8" stroke-width="1"/><circle cx="8" cy="8.3" r="5.3" fill="none" stroke="#a8c4ec" stroke-width=".8"/><rect x="7.2" y="3.6" width="1.8" height="1.8" fill="#fff"/><path d="M6.4 6.8 H9 V11 H10 V12.2 H6.2 V11 H7.2 V8 H6.4Z" fill="#fff"/></svg>
<span id="i2a" class="t" style="left:28.0px;top:72px;letter-spacing:0.16px;-webkit-text-stroke:.08px">Die mobile Hinweisgruppe <a>Mobile Clients</a></span>
<span id="i2b" class="t" style="left:28.4px;top:88px;letter-spacing:0.206px;-webkit-text-stroke:.08px">enthält noch nicht veröffentlichte</span>
<span id="i2c" class="t" style="left:28.8px;top:103px;letter-spacing:0.13px;-webkit-text-stroke:.08px">Änderungen.</span>
</div>
</div>
<div id="status">
<svg style="left:1071px;top:9px" width="12" height="12" viewBox="0 0 12 12"><rect x="9" y="1" width="2" height="2" fill="#fff"/><rect x="8" y="0" width="2" height="2" fill="#a0a0a0"/><rect x="5" y="5" width="2" height="2" fill="#fff"/><rect x="4" y="4" width="2" height="2" fill="#a0a0a0"/><rect x="9" y="5" width="2" height="2" fill="#fff"/><rect x="8" y="4" width="2" height="2" fill="#a0a0a0"/><rect x="1" y="9" width="2" height="2" fill="#fff"/><rect x="0" y="8" width="2" height="2" fill="#a0a0a0"/><rect x="5" y="9" width="2" height="2" fill="#fff"/><rect x="4" y="8" width="2" height="2" fill="#a0a0a0"/><rect x="9" y="9" width="2" height="2" fill="#fff"/><rect x="8" y="8" width="2" height="2" fill="#a0a0a0"/></svg>
</div>
</body>
</html>
